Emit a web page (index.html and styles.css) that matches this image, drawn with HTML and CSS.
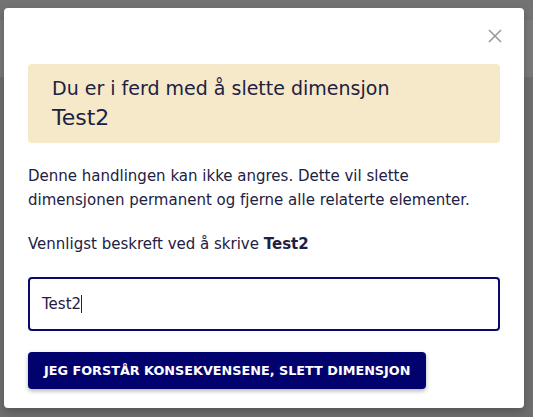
FILE: index.html
```html
<!DOCTYPE html>
<html lang="no">
<head>
    <meta charset="UTF-8">
    <meta name="viewport" content="width=device-width, initial-scale=1.0">
    <title>Slett dimensjon</title>
    <link rel="stylesheet" href="styles.css">
</head>
<body>
    <div class="dialog">
        <div class="dialog-header">
            <button class="close-btn" aria-label="Lukk">
                <svg width="14" height="14" viewBox="0 0 14 14">
                    <path d="M1 1 L13 13 M13 1 L1 13" stroke="#9a9a9a" stroke-width="1.6" fill="none"/>
                </svg>
            </button>
        </div>
        <div class="warning">
            <div class="warning-title">Du er i ferd med å slette dimensjon</div>
            <div class="warning-name">Test2</div>
        </div>
        <p class="info">Denne handlingen kan ikke angres. Dette vil slette dimensjonen permanent og fjerne alle relaterte elementer.</p>
        <p class="info">Vennligst beskreft ved å skrive <strong>Test2</strong></p>
        <div class="confirm-input">Test2<span class="caret"></span></div>
        <button class="delete-btn">Jeg forstår konsekvensene, slett dimensjon</button>
    </div>
</body>
</html>
```

FILE: styles.css
```css
body {
    margin: 0;
    padding: 8px 0 0 4px;
    height: 409px;
    font-family: "DejaVu Sans", sans-serif;
    color: #1d2142;
    background: linear-gradient(#737373 0, #737373 20px, #7a7a7a 20px, #7a7a7a 77px, #6f6f6f 77px);
}

.dialog {
    width: 520px;
    height: 400px;
    box-sizing: border-box;
    background: white;
    border-radius: 4px;
    padding: 0 24px;
    box-shadow: 0 4px 10px rgba(0, 0, 0, 0.25);
}

.dialog-header {
    height: 56px;
    display: flex;
    justify-content: flex-end;
    align-items: center;
    margin-right: -7px;
}
.close-btn {
    border: none;
    background: none;
    padding: 0;
    width: 24px;
    height: 24px;
    display: flex;
    align-items: center;
    justify-content: center;
}

.warning {
    background-color: #f5e9c9;
    border-radius: 4px;
    height: 79px;
    box-sizing: border-box;
    padding: 10px 24px;
}
.warning-title {
    font-size: 19px;
    line-height: 28px;
}
.warning-name {
    font-size: 22px;
    line-height: 32px;
}

.info {
    font-size: 15px;
    line-height: 24px;
    margin: 21px 0 0;
}
.info + .info {
    margin-top: 20px;
}
.info strong {
    font-weight: 700;
}

.confirm-input {
    margin-top: 21px;
    height: 54px;
    box-sizing: border-box;
    border: 2px solid #0a0a6e;
    border-radius: 4px;
    padding: 0 12px;
    display: flex;
    align-items: center;
    font-size: 15px;
}
.caret {
    display: inline-block;
    width: 1px;
    height: 18px;
    background: #1d2142;
}

.delete-btn {
    margin-top: 21px;
    height: 37px;
    padding: 0 16px;
    border: none;
    border-radius: 4px;
    background-color: #02026e;
    color: white;
    font-family: "DejaVu Sans", sans-serif;
    font-weight: 700;
    font-size: 12.8px;
    text-transform: uppercase;
    box-shadow: 0 2px 4px rgba(0, 0, 0, 0.3);
}
```
